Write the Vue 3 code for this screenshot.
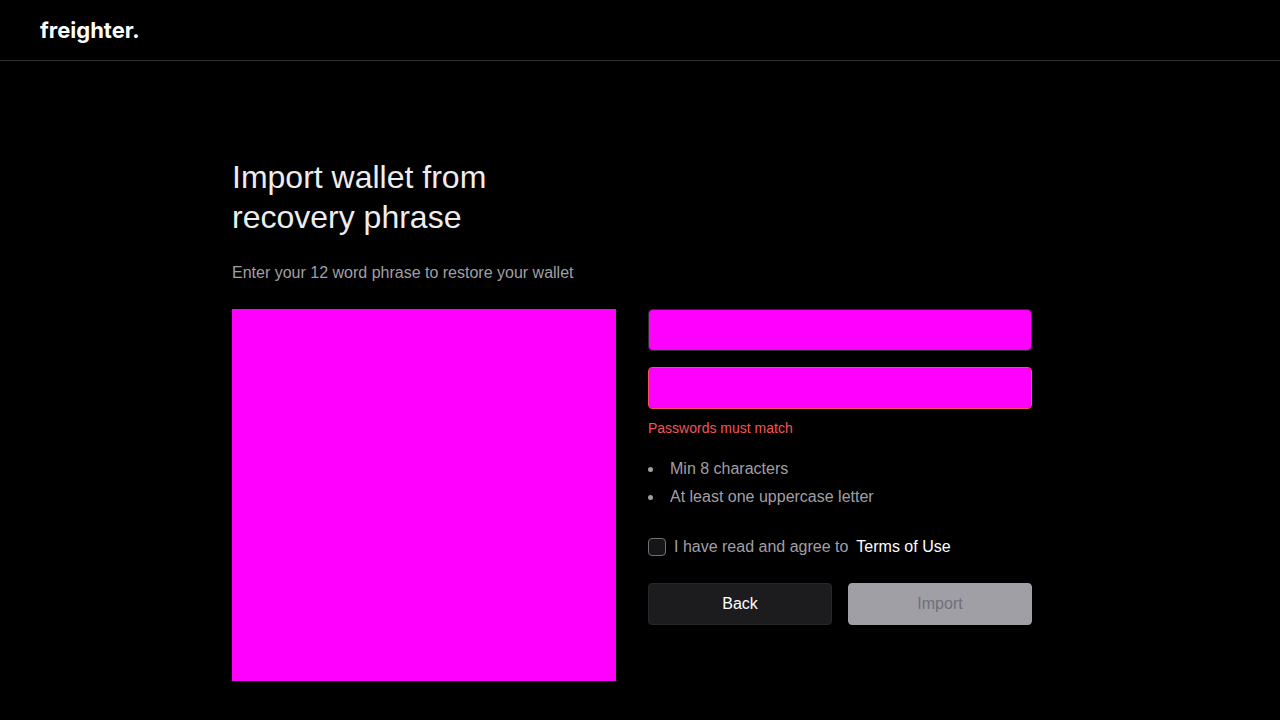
<script setup>
import { ref, computed } from 'vue'

const phrase = ref('')
const password = ref('')
const confirmPassword = ref('')
const agreed = ref(false)
const rules = ['Min 8 characters', 'At least one uppercase letter']
const canImport = computed(
  () => agreed.value && phrase.value !== '' && password.value.length >= 8 && password.value === confirmPassword.value
)
</script>

<template>
  <div class="page">
    <header class="header">
      <span class="logo">freighter.</span>
    </header>
    <main class="content">
      <h1 class="title">Import wallet from<br />recovery phrase</h1>
      <p class="subtitle">Enter your 12 word phrase to restore your wallet</p>
      <form class="form" @submit.prevent>
        <textarea v-model="phrase" class="phrase" aria-label="Recovery phrase"></textarea>
        <div class="side">
          <input v-model="password" class="field" type="password" aria-label="New password" />
          <input
            v-model="confirmPassword"
            class="field field-error"
            type="password"
            aria-label="Confirm password"
            aria-describedby="password-error"
          />
          <p id="password-error" class="error">Passwords must match</p>
          <ul class="rules">
            <li v-for="rule in rules" :key="rule" class="rule">{{ rule }}</li>
          </ul>
          <div class="terms">
            <input id="terms" v-model="agreed" class="check" type="checkbox" />
            <label for="terms">I have read and agree to</label>
            <a class="link" href="#terms">Terms of Use</a>
          </div>
          <div class="actions">
            <button class="button back" type="button">Back</button>
            <button class="button import" type="submit" :disabled="!canImport">Import</button>
          </div>
        </div>
      </form>
    </main>
  </div>
</template>

<style>
body {
  background: #000;
}
</style>

<style scoped>
.page {
  min-height: 100vh;
  box-sizing: border-box;
  color: #a09fa6;
  font-family: "Liberation Sans", Arial, sans-serif;
  font-size: 16px;
  line-height: 24px;
}
.header {
  display: flex;
  align-items: center;
  height: 60px;
  padding: 0 40px;
  border-bottom: 1px solid #2e2e32;
}
.logo {
  color: #fff;
  font-family: Inter, sans-serif;
  font-size: 22px;
  font-weight: 700;
  line-height: 24px;
}
.content {
  box-sizing: border-box;
  max-width: 816px;
  margin: 0 auto;
  padding: 96px 16px 39px 0;
}
.title {
  margin: 0 0 24px;
  color: #ededef;
  font-size: 32px;
  font-weight: 400;
  line-height: 40px;
}
.subtitle {
  margin: 0 0 24px;
}
.form {
  display: grid;
  grid-template-columns: 1fr 1fr;
  gap: 32px;
}
.phrase {
  display: block;
  box-sizing: border-box;
  width: 100%;
  min-height: 372px;
  padding: 16px;
  border: 0;
  background: #f0f;
  font: inherit;
  resize: none;
}
.side {
  display: flex;
  flex-direction: column;
}
.field {
  box-sizing: border-box;
  width: 100%;
  height: 42px;
  margin: 0 0 16px;
  padding: 0 16px;
  border: 1px solid #2e2e32;
  border-radius: 4px;
  background: #f0f;
  background-clip: padding-box;
  font: inherit;
}
.field-error {
  margin-bottom: 8px;
  border-color: #f2555a;
}
.error {
  margin: 0 0 16px;
  color: #f2555a;
  font-size: 14px;
  line-height: 22px;
}
.rules {
  margin: 0 0 24px;
  padding: 0;
  list-style: none;
}
.rule {
  display: flex;
  align-items: center;
  line-height: 28px;
}
.rule::before {
  content: "";
  width: 5px;
  height: 5px;
  margin-right: 17px;
  border-radius: 50%;
  background: currentColor;
}
.terms {
  display: flex;
  align-items: center;
  gap: 8px;
  margin-bottom: 24px;
}
.check {
  appearance: none;
  box-sizing: border-box;
  width: 18px;
  height: 18px;
  margin: 0;
  border: 1px solid #706f78;
  border-radius: 4px;
  background: #161618;
}
.check:checked {
  background: #a09fa6;
}
.link {
  color: #fff;
  text-decoration: none;
}
.actions {
  display: grid;
  grid-template-columns: 1fr 1fr;
  gap: 16px;
}
.button {
  height: 42px;
  padding: 0 16px;
  border: 1px solid #28282c;
  border-radius: 4px;
  font: inherit;
}
.back {
  background: #1c1c1f;
  color: #fff;
}
.import {
  border-color: #a09fa6;
  background: #a09fa6;
  color: #706f78;
}
</style>
